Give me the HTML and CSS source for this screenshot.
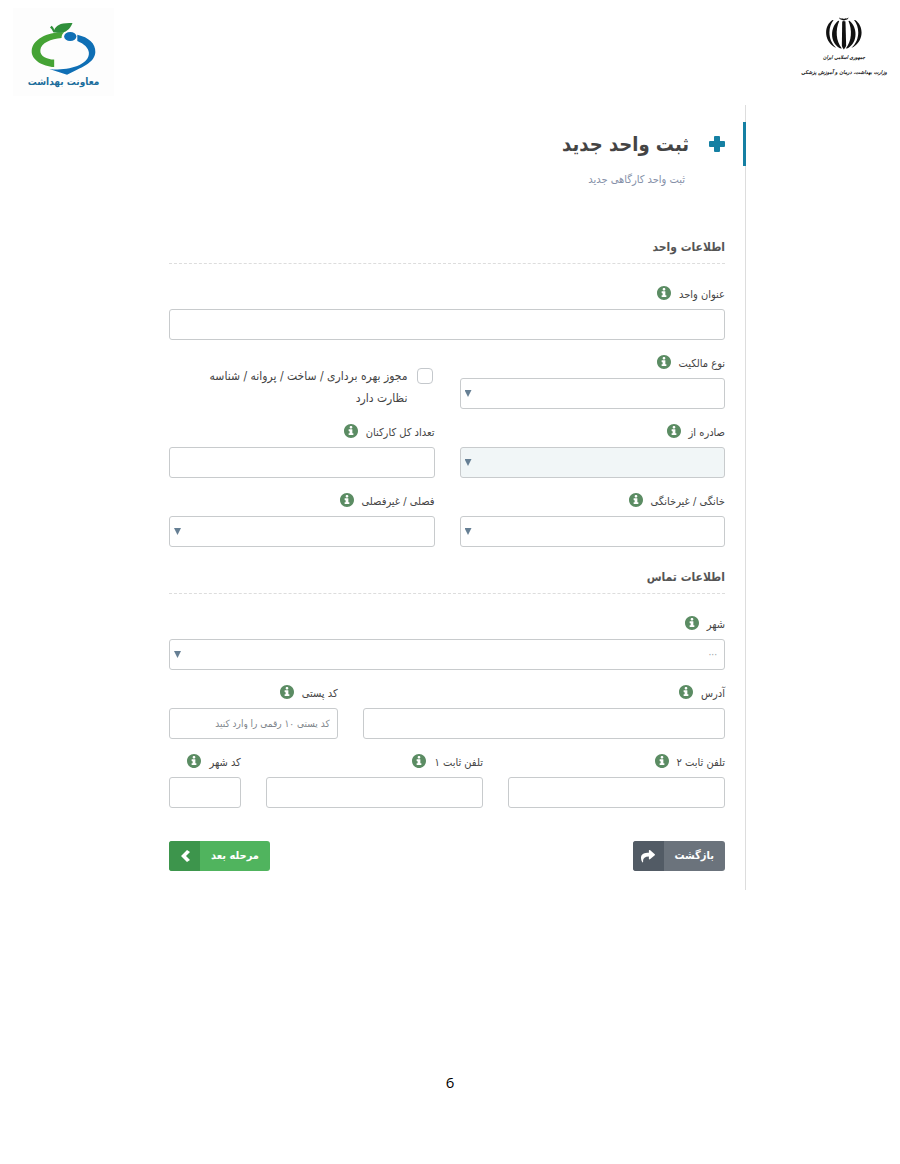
FILE: index.html
```html
<!DOCTYPE html>
<html lang="fa" dir="rtl">
<head>
  <meta charset="UTF-8" />
  <meta name="viewport" content="width=device-width, initial-scale=1.0"/>
  <title>ثبت واحد جدید</title>
  <link rel="stylesheet" href="styles.css">
</head>
<body>

  <!-- Shared icons -->
  <svg class="sprite" aria-hidden="true">
    <symbol id="info" viewBox="8 8 496 496">
      <path d="M256 8C119.043 8 8 119.083 8 256c0 136.997 111.043 248 248 248s248-111.003 248-248C504 119.083 392.957 8 256 8zm0 70c28 0 48 19 48 46s-20 46-48 46-48-19-48-46 20-46 48-46zm84 312c0 7-5 12-12 12H184c-7 0-12-5-12-12v-42c0-7 5-12 12-12h24v-74h-24c-7 0-12-5-12-12v-42c0-7 5-12 12-12h108c7 0 12 5 12 12v128h24c7 0 12 5 12 12z"/>
    </symbol>
  </svg>

  <!-- Header -->
  <header class="header">
    <div class="ministry">
      <svg class="emblem" viewBox="108 50 115 102" aria-hidden="true">
        <path d="M151 53q4 6 9 3 2 2 5 2t5-2q5 3 9-3 0 9-8 8-3 2-6 2t-6-2q-8 1-8-8z"/>
        <path d="M160 66q5-3 10 0l2 74q-2 4-7 11-5-7-6-11z"/>
        <path d="M131 62c-27 17-27 62 5 81l6 3c-26-23-26-61-8-84z"/>
        <path d="M148 64c-24 19-27 65 5 83l6 1c-18-22-20-56-8-83z"/>
        <path d="M199 62c27 17 27 62-5 81l-6 3c26-23 26-61 8-84z"/>
        <path d="M182 64c24 19 27 65-5 83l-6 1c18-22 20-56 8-83z"/>
      </svg>
      <span class="ministry-country">جمهوری اسلامی ایران</span>
      <span class="ministry-name">وزارت بهداشت، درمان و آموزش پزشکی</span>
    </div>

    <div class="deputy">
      <svg class="apple" viewBox="91 66 206 168" aria-hidden="true">
        <path fill="#45a335" d="M196 98C148 96 97 118 95 156c-1 28 34 48 70 50v-23c-24-1-45-11-43-30 2-21 33-35 66-37 0-8 2-13 8-18z"/>
        <path fill="#2f8f3a" d="M163 99c-4-8-6-12-11-16l5-5c5 4 7 8 8 13 6-15 20-24 57-22-9 23-25 34-52 30z"/>
        <ellipse fill="#0f6fb5" cx="215" cy="111" rx="19" ry="14"/>
        <path fill="#0f6fb5" d="M237 106c36 8 57 28 56 54-2 34-46 48-88 70l-55-18c58 8 125-12 123-50-1-16-15-28-36-37z"/>
      </svg>
      <span class="deputy-name">معاونت بهداشت</span>
    </div>
  </header>

  <!-- New unit form -->
  <main class="card">
    <div class="title">
      <svg class="plus" viewBox="0 0 16 16" aria-hidden="true"><path d="M6 0h4q1 0 1 1v4h4q1 0 1 1v4q0 1-1 1h-4v4q0 1-1 1H6q-1 0-1-1v-4H1q-1 0-1-1V6q0-1 1-1h4V1q0-1 1-1z"/></svg>
      <h1>ثبت واحد جدید</h1>
    </div>
    <p class="subtitle">ثبت واحد کارگاهی جدید</p>

    <form>
      <h2>اطلاعات واحد</h2>
      <div class="grid">
        <div class="field col-12">
          <label for="unitTitle">عنوان واحد <svg class="info"><use href="#info"/></svg></label>
          <input type="text" id="unitTitle" />
        </div>

        <div class="field col-6">
          <label for="ownership">نوع مالکیت <svg class="info"><use href="#info"/></svg></label>
          <div class="select"><select id="ownership"><option></option></select></div>
        </div>
        <div class="check col-6">
          <input type="checkbox" id="license" />
          <label for="license">مجوز بهره برداری / ساخت / پروانه / شناسه نظارت دارد</label>
        </div>

        <div class="field col-6">
          <label for="issuer">صادره از <svg class="info"><use href="#info"/></svg></label>
          <div class="select"><select id="issuer" disabled><option></option></select></div>
        </div>
        <div class="field col-6">
          <label for="staff">تعداد کل کارکنان <svg class="info"><use href="#info"/></svg></label>
          <input type="text" id="staff" />
        </div>

        <div class="field col-6">
          <label for="home">خانگی / غیرخانگی <svg class="info"><use href="#info"/></svg></label>
          <div class="select"><select id="home"><option></option></select></div>
        </div>
        <div class="field col-6">
          <label for="season">فصلی / غیرفصلی <svg class="info"><use href="#info"/></svg></label>
          <div class="select"><select id="season"><option></option></select></div>
        </div>
      </div>

      <h2>اطلاعات تماس</h2>
      <div class="grid">
        <div class="field col-12">
          <label for="city">شهر <svg class="info"><use href="#info"/></svg></label>
          <div class="select"><select id="city"><option>···</option></select></div>
        </div>

        <div class="field col-8">
          <label for="address">آدرس <svg class="info"><use href="#info"/></svg></label>
          <input type="text" id="address" />
        </div>
        <div class="field col-4">
          <label for="postal">کد پستی <svg class="info"><use href="#info"/></svg></label>
          <input type="text" id="postal" placeholder="کد پستی ۱۰ رقمی را وارد کنید" />
        </div>

        <div class="field col-5">
          <label for="phone2">تلفن ثابت ۲ <svg class="info"><use href="#info"/></svg></label>
          <input type="text" id="phone2" />
        </div>
        <div class="field col-5">
          <label for="phone1">تلفن ثابت ۱ <svg class="info"><use href="#info"/></svg></label>
          <input type="text" id="phone1" />
        </div>
        <div class="field col-2">
          <label for="cityCode">کد شهر <svg class="info"><use href="#info"/></svg></label>
          <input type="text" id="cityCode" />
        </div>
      </div>

      <div class="actions">
        <button type="button" class="btn btn-back">
          <span class="btn-text">بازگشت</span>
          <span class="btn-icon"><svg viewBox="0 0 512 512"><path d="M503.691 189.836L327.687 37.851C312.281 24.546 288 35.347 288 56.015v80.053C127.371 137.907 0 170.1 0 322.326c0 61.441 20 122.309 50 165 12 14 33 0 28-18C60 340 132.917 274.316 288 272.085V360c0 20.7 24.3 31.453 39.687 18.164l176.004-152c11.071-9.562 11.086-26.753 0-36.328z"/></svg></span>
        </button>
        <button type="submit" class="btn btn-next">
          <span class="btn-text">مرحله بعد</span>
          <span class="btn-icon"><svg viewBox="0 0 14 14"><path d="M9 1l3 2-4 4 4 4-3 2-6-6z"/></svg></span>
        </button>
      </div>
    </form>
  </main>

  <footer class="page-number">6</footer>

</body>
</html>
```
FILE: styles.css
```css
* {
  box-sizing: border-box;
}

body {
  margin: 0;
  font-family: 'DejaVu Sans Condensed', 'DejaVu Sans', sans-serif;
  font-size: 11px;
  color: #444;
  background-color: #fff;
}

.sprite {
  display: none;
}

/* Header */
.header {
  display: flex;
  justify-content: space-between;
  align-items: flex-start;
  height: 105px;
  padding: 8px 13px;
}

.ministry {
  display: flex;
  flex-direction: column;
  align-items: center;
  padding-top: 8px;
  color: #111;
  font-style: italic;
  font-weight: bold;
  white-space: nowrap;
}

.emblem {
  width: 38px;
  height: 34px;
  fill: #111;
}

.ministry-country {
  font-size: 5px;
  line-height: 14px;
}

.ministry-name {
  font-family: 'DejaVu Sans', sans-serif;
  font-size: 5px;
  line-height: 16px;
}

.deputy {
  display: flex;
  flex-direction: column;
  align-items: center;
  width: 101px;
  height: 88px;
  padding-top: 14px;
  background-color: #fdfdfd;
}

.apple {
  width: 67px;
  height: 54px;
}

.deputy-name {
  color: #1b6d9c;
  font-size: 10px;
  font-weight: bold;
  line-height: 12px;
  white-space: nowrap;
}

/* Card */
.card {
  margin: 0 154px 0 149px;
  padding: 17px 20px 19px;
  border-right: 1px solid #ddd;
}

.title {
  display: flex;
  align-items: center;
  gap: 20px;
  height: 44px;
  margin-right: -21px;
  padding-right: 18px;
  border-right: 3px solid #1580a3;
}

.plus {
  width: 16px;
  height: 16px;
  fill: #1580a3;
}

h1 {
  margin: 0;
  color: #444;
  font-size: 20px;
  line-height: 44px;
}

.subtitle {
  margin: 4px 40px 41px 0;
  color: #8590a8;
  font-size: 11px;
  line-height: 20px;
}

h2 {
  margin: 14px 0 17px;
  color: #555;
  border-bottom: 1px dashed #ddd;
  font-size: 12px;
  line-height: 32px;
}

/* Fields */
.grid {
  display: grid;
  grid-template-columns: repeat(12, 1fr);
  gap: 10px 25px;
}

.col-2 {
  grid-column: span 2;
}

.col-4 {
  grid-column: span 4;
}

.col-5 {
  grid-column: span 5;
}

.col-6 {
  grid-column: span 6;
}

.col-8 {
  grid-column: span 8;
}

.col-12 {
  grid-column: span 12;
}

.field label {
  display: flex;
  gap: 8px;
  height: 24px;
  margin-bottom: 4px;
  line-height: 28px;
  white-space: nowrap;
}

.info {
  width: 14px;
  height: 14px;
  margin-top: 5px;
  fill: #5b8c63;
}

input[type="text"],
select {
  display: block;
  width: 100%;
  height: 31px;
  padding: 0 7px;
  border: 1px solid #c8cbcd;
  border-radius: 3px;
  background-color: #fff;
  color: #9a9fa6;
  font-family: inherit;
  font-size: 10px;
}

input::placeholder {
  color: #80868c;
}

select {
  appearance: none;
}

select:disabled {
  background-color: #f1f6f7;
  opacity: 1;
}

.select {
  position: relative;
}

.select::after {
  content: "";
  position: absolute;
  left: 5px;
  top: 12px;
  width: 7px;
  height: 7px;
  background-color: #667f94;
  clip-path: polygon(0 0, 100% 0, 50% 100%);
  pointer-events: none;
}

.check {
  display: flex;
  align-items: flex-start;
  gap: 9px;
  padding: 15px 2px 0 0;
}

.check input {
  appearance: none;
  flex: none;
  width: 16px;
  height: 16px;
  margin: 3px 0 0;
  border: 1px solid #c4c8cc;
  border-radius: 4px;
}

.check label {
  max-width: 205px;
  font-size: 12px;
  line-height: 22px;
}

/* Buttons */
.actions {
  display: flex;
  justify-content: space-between;
  margin-top: 33px;
}

.btn {
  display: flex;
  height: 30px;
  padding: 0;
  border: none;
  border-radius: 3px;
  overflow: hidden;
  color: #fff;
  font-family: inherit;
  font-size: 11px;
  font-weight: bold;
  cursor: pointer;
}

.btn-text {
  padding: 0 11px;
  line-height: 29px;
}

.btn-icon {
  display: flex;
  align-items: center;
  justify-content: center;
  width: 31px;
  height: 30px;
}

.btn-icon svg {
  width: 14px;
  height: 14px;
  fill: #fff;
}

.btn-back {
  background-color: #6b737c;
}

.btn-back .btn-icon {
  background-color: #525b65;
}

.btn-next {
  background-color: #50b45e;
}

.btn-next .btn-icon {
  background-color: #3d954c;
}

.page-number {
  margin-top: 180px;
  color: #000;
  font-family: 'Open Sans', sans-serif;
  font-size: 15px;
  line-height: 24px;
  text-align: center;
}
```
